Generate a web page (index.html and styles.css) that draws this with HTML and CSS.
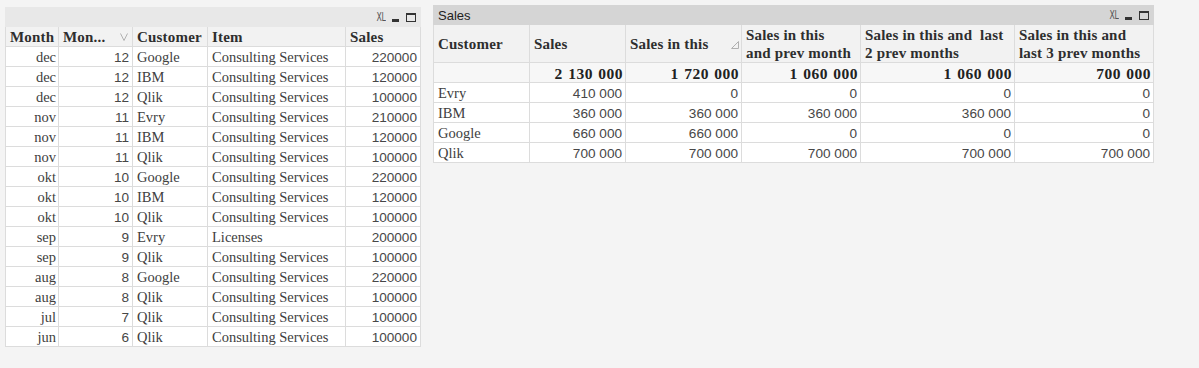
FILE: index.html
```html
<!DOCTYPE html>
<html>
<head>
<meta charset="utf-8">
<link rel="stylesheet" href="styles.css">
</head>
<body>
<div class="board">
  <div class="panel panel-left">
    <div class="caption caption-inactive">
      <span class="caption-title"></span>
      <div class="ctrls">
        <span class="xl">XL</span>
        <span class="min"></span>
        <span class="max"></span>
      </div>
    </div>
    <table class="grid grid-left">
      <thead>
        <tr class="head">
          <th class="c-month">Month</th>
          <th class="c-mon sortable">Mon...<svg class="sort sort-down" width="8" height="8" viewBox="0 0 8 8"><polyline points="0.5,0.5 4,7.5 7.5,0.5" fill="none" stroke="#b0b0b0" stroke-width="1"/></svg></th>
          <th class="c-cust">Customer</th>
          <th class="c-item">Item</th>
          <th class="c-sales">Sales</th>
        </tr>
      </thead>
      <tbody>
        <tr><td class="r">dec</td><td class="n">12</td><td>Google</td><td>Consulting Services</td><td class="n">220000</td></tr>
        <tr><td class="r">dec</td><td class="n">12</td><td>IBM</td><td>Consulting Services</td><td class="n">120000</td></tr>
        <tr><td class="r">dec</td><td class="n">12</td><td>Qlik</td><td>Consulting Services</td><td class="n">100000</td></tr>
        <tr><td class="r">nov</td><td class="n">11</td><td>Evry</td><td>Consulting Services</td><td class="n">210000</td></tr>
        <tr><td class="r">nov</td><td class="n">11</td><td>IBM</td><td>Consulting Services</td><td class="n">120000</td></tr>
        <tr><td class="r">nov</td><td class="n">11</td><td>Qlik</td><td>Consulting Services</td><td class="n">100000</td></tr>
        <tr><td class="r">okt</td><td class="n">10</td><td>Google</td><td>Consulting Services</td><td class="n">220000</td></tr>
        <tr><td class="r">okt</td><td class="n">10</td><td>IBM</td><td>Consulting Services</td><td class="n">120000</td></tr>
        <tr><td class="r">okt</td><td class="n">10</td><td>Qlik</td><td>Consulting Services</td><td class="n">100000</td></tr>
        <tr><td class="r">sep</td><td class="n">9</td><td>Evry</td><td>Licenses</td><td class="n">200000</td></tr>
        <tr><td class="r">sep</td><td class="n">9</td><td>Qlik</td><td>Consulting Services</td><td class="n">100000</td></tr>
        <tr><td class="r">aug</td><td class="n">8</td><td>Google</td><td>Consulting Services</td><td class="n">220000</td></tr>
        <tr><td class="r">aug</td><td class="n">8</td><td>Qlik</td><td>Consulting Services</td><td class="n">100000</td></tr>
        <tr><td class="r">jul</td><td class="n">7</td><td>Qlik</td><td>Consulting Services</td><td class="n">100000</td></tr>
        <tr><td class="r">jun</td><td class="n">6</td><td>Qlik</td><td>Consulting Services</td><td class="n">100000</td></tr>
      </tbody>
    </table>
  </div>

  <div class="panel panel-right">
    <div class="caption caption-active">
      <span class="caption-title">Sales</span>
      <div class="ctrls">
        <span class="xl">XL</span>
        <span class="min"></span>
        <span class="max"></span>
      </div>
    </div>
    <table class="grid grid-right">
      <thead>
        <tr class="head head-tall">
          <th class="k-cust">Customer</th>
          <th class="k-sales">Sales</th>
          <th class="k-this sortable">Sales in this<svg class="sort sort-up" width="8" height="8" viewBox="0 0 8 8"><polyline points="0.5,7.5 7.5,0.5 7.5,7.5 0.5,7.5" fill="none" stroke="#b0b0b0" stroke-width="1"/></svg></th>
          <th class="k-prev">Sales in this<br>and prev month</th>
          <th class="k-prev2">Sales in this and&nbsp; last<br>2 prev months</th>
          <th class="k-prev3">Sales in this and<br>last 3 prev months</th>
        </tr>
        <tr class="totals">
          <td></td>
          <td class="t">2 130 000</td>
          <td class="t">1 720 000</td>
          <td class="t">1 060 000</td>
          <td class="t">1 060 000</td>
          <td class="t">700 000</td>
        </tr>
      </thead>
      <tbody>
        <tr><td>Evry</td><td class="n">410 000</td><td class="n">0</td><td class="n">0</td><td class="n">0</td><td class="n">0</td></tr>
        <tr><td>IBM</td><td class="n">360 000</td><td class="n">360 000</td><td class="n">360 000</td><td class="n">360 000</td><td class="n">0</td></tr>
        <tr><td>Google</td><td class="n">660 000</td><td class="n">660 000</td><td class="n">0</td><td class="n">0</td><td class="n">0</td></tr>
        <tr><td>Qlik</td><td class="n">700 000</td><td class="n">700 000</td><td class="n">700 000</td><td class="n">700 000</td><td class="n">700 000</td></tr>
      </tbody>
    </table>
  </div>
</div>
</body>
</html>
```

FILE: styles.css
```css
html, body {
  margin: 0;
  padding: 0;
  background: #f4f4f4;
}

.board {
  display: flex;
  align-items: flex-start;
  gap: 12px;
  padding-left: 5px;
}

.panel-left {
  margin-top: 7px;
  width: 416px;
}

.panel-right {
  margin-top: 5px;
  width: 721px;
}

.caption {
  height: 20px;
  display: flex;
  align-items: center;
  justify-content: space-between;
  box-sizing: border-box;
}

.caption-inactive {
  background: #e8e8e8;
}

.caption-active {
  background: #d5d5d5;
}

.caption-title {
  font-family: "Liberation Sans", Arial, sans-serif;
  font-size: 13px;
  color: #222;
  padding-left: 5px;
}

.ctrls {
  display: flex;
  align-items: center;
  gap: 5px;
  padding-right: 5px;
}

.xl {
  display: inline-block;
  font-family: "DejaVu Sans Condensed", "DejaVu Sans", sans-serif;
  font-stretch: condensed;
  font-size: 12px;
  color: #555;
  transform: scaleX(0.72);
  transform-origin: right center;
  letter-spacing: -0.5px;
  line-height: 12px;
  margin-left: -4px;
  margin-right: 2px;
}

.min {
  width: 7px;
  height: 3px;
  background: #333;
  margin-top: 6px;
}

.max {
  width: 10px;
  height: 9px;
  box-sizing: border-box;
  border: 1px solid #333;
  border-top-width: 2px;
  margin-left: 2px;
}

.grid {
  border-collapse: separate;
  border-spacing: 0;
  table-layout: fixed;
  width: 100%;
  background: #fff;
}

.grid th,
.grid td {
  box-sizing: border-box;
  border-right: 1px solid #dcdcdc;
  border-bottom: 1px solid #dcdcdc;
  padding: 1px 3px 0 4px;
  white-space: nowrap;
  overflow: hidden;
  font-family: "Liberation Serif", "Times New Roman", serif;
  font-size: 14.5px;
  color: #404040;
  line-height: 17px;
}

.grid th:first-child,
.grid td:first-child {
  border-left: 1px solid #dcdcdc;
}

.grid tr {
  height: 20px;
}

.grid .head th {
  background: #f2f2f2;
  font-weight: bold;
  font-size: 15px;
  letter-spacing: 0.2px;
  color: #2e2e2e;
  text-align: left;
  padding-top: 1px;
}

.grid .r {
  text-align: right;
  padding-right: 2px;
}

.grid .n {
  text-align: right;
  font-family: "Liberation Sans", Arial, sans-serif;
  font-size: 13.6px;
  color: #474747;
}

.sortable {
  position: relative;
}

.sort {
  position: absolute;
}

.sort-down {
  right: 4px;
  top: 6px;
}

.sort-up {
  right: 2px;
  top: 16px;
}

/* left table columns */
.c-month { width: 54px; }
.c-mon { width: 74px; }
.c-cust { width: 75px; }
.c-item { width: 138px; }
.c-sales { width: 75px; }

/* right table columns */
.k-cust { width: 97px; }
.k-sales { width: 96px; }
.k-this { width: 116px; }
.k-prev { width: 119px; }
.k-prev2 { width: 154px; }
.k-prev3 { width: 139px; }

.grid-right .head-tall {
  height: 38px;
}

.grid-right .head-tall th {
  line-height: 18px;
  vertical-align: middle;
  padding-top: 0;
}

.grid-right .totals td {
  background: #f7f7f7;
}

.grid-right .totals .t {
  text-align: right;
  font-weight: bold;
  font-size: 15.5px;
  letter-spacing: 0.5px;
  word-spacing: 1px;
  padding-right: 2px;
  color: #222;
}
```
